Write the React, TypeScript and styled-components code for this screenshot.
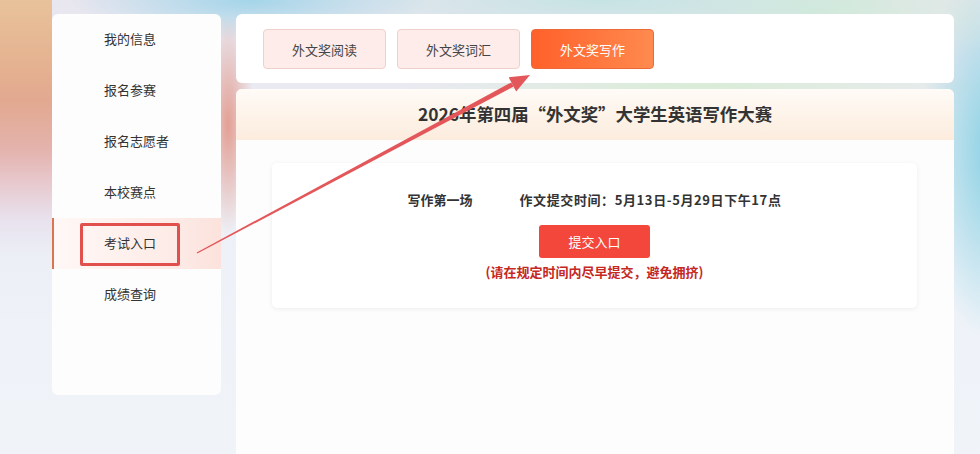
import React from 'react';
import styled, { createGlobalStyle } from 'styled-components';

const FONT = '"Noto Sans CJK SC", "Noto Sans", "Liberation Sans", sans-serif';

const GlobalStyle = createGlobalStyle`
    html, body {
        margin: 0;
        padding: 0;
        overflow: hidden;
        font-family: ${FONT};
    }
`;

const Page = styled.div`
    position: relative;
    display: flex;
    gap: 15px;
    box-sizing: border-box;
    width: 980px;
    height: 454px;
    padding: 14px 26px 0 52px;
    overflow: hidden;
    background:
        radial-gradient(ellipse 26px 110px at 228px 125px, #e39f94 0%, rgba(227, 159, 148, 0) 100%),
        radial-gradient(ellipse 180px 40px at 250px 0px, #a3d5e9 0%, rgba(163, 213, 233, 0) 100%),
        radial-gradient(ellipse 300px 45px at 600px 0px, #c6e3e4 0%, rgba(198, 227, 228, 0) 100%),
        radial-gradient(ellipse 220px 60px at 820px 10px, #d3ebd9 0%, rgba(211, 235, 217, 0) 100%),
        radial-gradient(ellipse 70px 190px at 990px 150px, #8bd2e4 0%, rgba(139, 210, 228, 0.5) 50%, rgba(139, 210, 228, 0) 100%),
        radial-gradient(ellipse 300px 20px at 700px 86px, #d9ecd6 0%, rgba(217, 236, 214, 0) 100%),
        linear-gradient(180deg, #e8c29a 0px, #e5b391 60px, #e2a990 100px, #e4b3ad 150px, #e7c7cb 180px, #e8e2ee 220px, #ecf0f6 260px, rgba(238, 242, 248, 0) 330px) 0 0 / 52px 454px no-repeat,
        linear-gradient(180deg, #e8e6ef 0%, #eef2f8 60%, #f0f4f9 100%);
`;

const Sidebar = styled.nav`
    flex: 0 0 169px;
    height: 381px;
    background: #fdfdfd;
    border-radius: 6px;
    overflow: hidden;
`;

const MenuItem = styled.div<{ active?: boolean }>`
    position: relative;
    display: flex;
    align-items: center;
    height: 51px;
    box-sizing: border-box;
    padding: 0 0 3px ${({ active }) => (active ? '50px' : '52px')};
    font-size: 13px;
    color: #333;
    border-left: ${({ active }) => (active ? '2px solid #d8774f' : 'none')};
    background: ${({ active }) =>
        active ? 'linear-gradient(90deg, #fff8f6 0%, #fdebe7 70%, #fce2dc 100%)' : 'transparent'};
`;

const Highlight = styled.span`
    position: absolute;
    left: 26px;
    top: 5px;
    width: 100px;
    height: 43px;
    box-sizing: border-box;
    border: 3px solid #e2504e;
    border-radius: 2px;
`;

const MainColumn = styled.main`
    flex: 1;
    display: flex;
    flex-direction: column;
    gap: 6px;
`;

const TabBar = styled.div`
    display: flex;
    gap: 11px;
    height: 69px;
    box-sizing: border-box;
    padding: 15px 27px;
    background: #fff;
    border-radius: 6px;
`;

const Tab = styled.div<{ active?: boolean }>`
    display: flex;
    align-items: center;
    justify-content: center;
    width: 123px;
    height: 40px;
    box-sizing: border-box;
    border-radius: 4px;
    font-size: 13px;
    color: ${({ active }) => (active ? '#fff' : '#444')};
    background: ${({ active }) =>
        active ? 'linear-gradient(90deg, #ff612a 0%, #ff8a4f 100%)' : '#fdecea'};
    border: 1px solid ${({ active }) => (active ? '#ec6a3a' : '#efd0cd')};
`;

const ContestCard = styled.section`
    flex: 1;
    display: flex;
    flex-direction: column;
    background: #fdfdfd;
    border-radius: 6px 6px 0 0;
    overflow: hidden;
`;

const ContestHeader = styled.header`
    display: flex;
    align-items: center;
    justify-content: center;
    height: 51px;
    background: linear-gradient(180deg, #fffbf7 0%, #fdf2e7 60%, #fcecde 100%);
`;

const Title = styled.h1`
    margin: 0 0 2px;
    font-size: 17.4px;
    font-weight: 700;
    color: #333;
`;

const SessionCard = styled.div`
    display: flex;
    flex-direction: column;
    align-items: center;
    height: 145px;
    box-sizing: border-box;
    margin: 23px 37px 0 36px;
    padding-top: 28px;
    background: #fff;
    border-radius: 5px;
    box-shadow: 0 1px 5px rgba(0, 0, 0, 0.07);
`;

const SessionRow = styled.div`
    display: flex;
    gap: 47px;
    font-size: 13px;
    font-weight: 700;
    color: #333;
    line-height: 18px;
`;

const SessionTime = styled.span`
    letter-spacing: 0.6px;
`;

const SubmitButton = styled.button`
    width: 111px;
    height: 33px;
    margin-top: 16px;
    border: none;
    border-radius: 3px;
    background: #f2473a;
    color: #fff;
    font-family: ${FONT};
    font-size: 13px;
    cursor: pointer;
`;

const Notice = styled.div`
    margin-top: 5px;
    font-size: 13px;
    font-weight: 700;
    color: #c5281f;
    line-height: 18px;
`;

const ArrowOverlay = styled.svg`
    position: absolute;
    left: 0;
    top: 0;
    width: 980px;
    height: 454px;
    pointer-events: none;
`;

const menu = ['我的信息', '报名参赛', '报名志愿者', '本校赛点', '考试入口', '成绩查询'];
const tabs = ['外文奖阅读', '外文奖词汇', '外文奖写作'];

const App = () => {
    return (
        <>
            <GlobalStyle />
            <Page>
                <Sidebar>
                    {menu.map((item) => (
                        <MenuItem key={item} active={item === '考试入口'}>
                            {item === '考试入口' && <Highlight />}
                            <span style={{ position: 'relative' }}>{item}</span>
                        </MenuItem>
                    ))}
                </Sidebar>
                <MainColumn>
                    <TabBar>
                        {tabs.map((tab) => (
                            <Tab key={tab} active={tab === '外文奖写作'}>{tab}</Tab>
                        ))}
                    </TabBar>
                    <ContestCard>
                        <ContestHeader>
                            <Title>2026年第四届“外文奖”大学生英语写作大赛</Title>
                        </ContestHeader>
                        <SessionCard>
                            <SessionRow>
                                <span>写作第一场</span>
                                <SessionTime>作文提交时间：5月13日-5月29日下午17点</SessionTime>
                            </SessionRow>
                            <SubmitButton>提交入口</SubmitButton>
                            <Notice>(请在规定时间内尽早提交，避免拥挤)</Notice>
                        </SessionCard>
                    </ContestCard>
                </MainColumn>
                <ArrowOverlay viewBox="0 0 980 454">
                    <polygon
                        points="197.3,253.6 196.7,252.4 511.2,82.4 513.6,86.6"
                        fill="#e3575a"
                    />
                    <polygon points="530,75 508.6,77.3 516.2,91.5" fill="#e3575a" />
                </ArrowOverlay>
            </Page>
        </>
    );
};

export default App;
